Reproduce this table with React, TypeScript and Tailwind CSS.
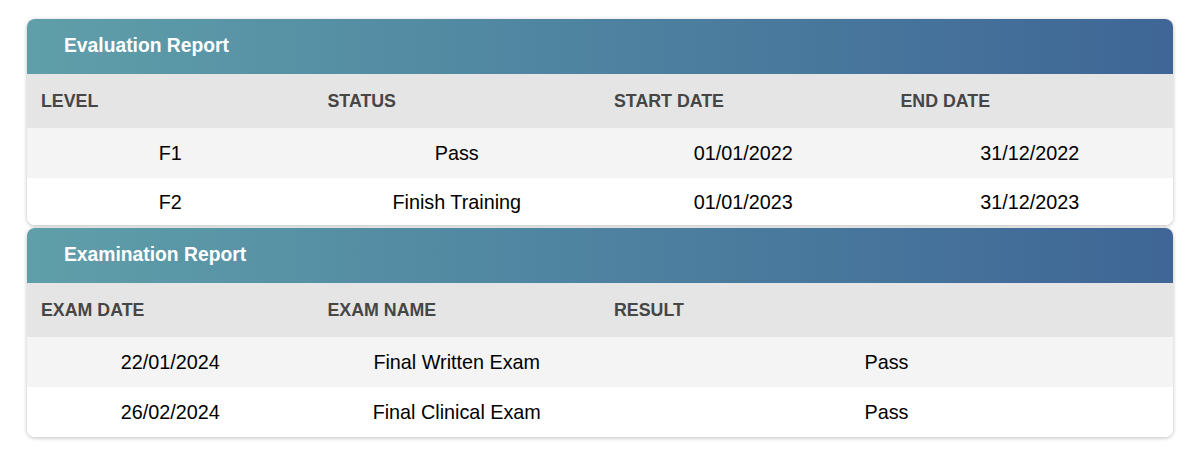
import React from "react";

const font = { fontFamily: '"Liberation Sans", Arial, Helvetica, sans-serif' };

function Card({
  title,
  headers,
  rows,
  lastShort,
  className,
}: {
  title: string;
  headers: string[];
  rows: { cells: string[]; span?: number[] }[];
  lastShort?: boolean;
  className?: string;
}) {
  return (
    <div
      className={
        "rounded-[8px] bg-white shadow-[0_1px_4px_rgba(0,0,0,0.25)] overflow-hidden " +
        (className ?? "")
      }
    >
      <div className="h-[55px] flex items-center pl-[37px] pb-[1px] bg-gradient-to-r from-[#5f9fa9] to-[#3f6696]">
        <span className="text-white font-bold text-[19.3px]">{title}</span>
      </div>
      <div className="grid grid-cols-4 h-[54px] items-center pt-[1px] bg-[#e5e5e5]">
        {headers.map((h, i) => (
          <div key={i} className="pl-[14px] font-bold text-[17.8px] text-[#464646]">
            {h}
          </div>
        ))}
      </div>
      {rows.map((r, ri) => (
        <div
          key={ri}
          className={
            "grid grid-cols-4 items-center " +
            (ri % 2 === 0 ? "bg-[#f4f4f4] " : "bg-white ") +
            (lastShort && ri === rows.length - 1 ? "h-[47px] pt-[3px]" : "h-[50px] pt-[1px]")
          }
        >
          {r.cells.map((c, ci) => (
            <div
              key={ci}
              className={
                "text-center text-[19.8px] text-black " +
                (r.span && r.span[ci] === 2 ? "col-span-2" : "")
              }
            >
              {c}
            </div>
          ))}
        </div>
      ))}
    </div>
  );
}

export default function App() {
  return (
    <div className="w-[1200px] h-[465px] bg-white pt-[19px] px-[27px]" style={font}>
      <Card
        title="Evaluation Report"
        headers={["LEVEL", "STATUS", "START DATE", "END DATE"]}
        rows={[
          { cells: ["F1", "Pass", "01/01/2022", "31/12/2022"] },
          { cells: ["F2", "Finish Training", "01/01/2023", "31/12/2023"] },
        ]}
        lastShort
      />
      <Card
        className="mt-[3px]"
        title="Examination Report"
        headers={["EXAM DATE", "EXAM NAME", "RESULT", ""]}
        rows={[
          { cells: ["22/01/2024", "Final Written Exam", "Pass"], span: [1, 1, 2] },
          { cells: ["26/02/2024", "Final Clinical Exam", "Pass"], span: [1, 1, 2] },
        ]}
      />
    </div>
  );
}
